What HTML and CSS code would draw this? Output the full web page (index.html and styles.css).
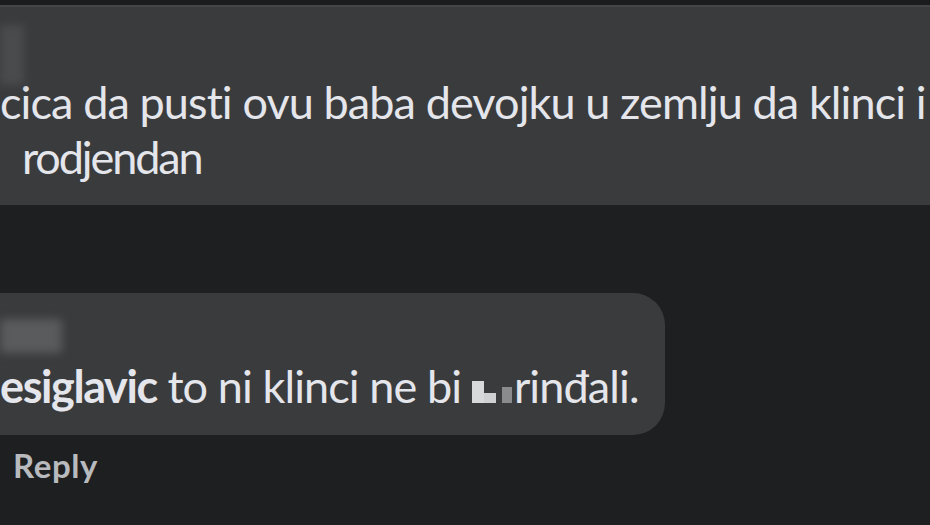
FILE: index.html
```html
<!DOCTYPE html>
<html lang="sr">
<head>
<meta charset="utf-8">
<title>Comment</title>
<link rel="stylesheet" href="styles.css">
</head>
<body>
<div class="page">
  <div class="top-strip"></div>
  <div class="bubble bubble-top">
    <div class="blur-name blur-top"></div>
    <div class="line line-1">cica da pusti ovu baba devojku u zemlju da klinci i</div>
    <div class="line line-2">rodjendan</div>
  </div>
  <div class="reply-area">
    <div class="bubble bubble-reply">
      <div class="blur-name blur-reply"></div>
      <div class="line reply-text"><span class="mention">esiglavic</span> to ni klinci ne bi <span class="censor"><span class="px px-a"></span><span class="px px-b"></span><span class="px px-c"></span></span>rinđali.</div>
    </div>
    <div class="actions"><span class="reply-link">Reply</span></div>
  </div>
</div>
</body>
</html>
```
FILE: styles.css
```css
html, body {
  margin: 0;
  padding: 0;
  background: #1e1f21;
  width: 930px;
  height: 525px;
  overflow: hidden;
}
.page {
  width: 930px;
  height: 525px;
  overflow: hidden;
  font-family: Lato, "Open Sans", sans-serif;
  color: #e4e6eb;
}
.top-strip {
  height: 5px;
  background: #1b1c1e;
}
.bubble {
  background: #3a3b3d;
}
.bubble-top {
  height: 198px;
  border-top: 2px solid #444547;
  display: flex;
  flex-direction: column;
}
.blur-top {
  width: 24px;
  height: 60px;
  margin-top: 18px;
  background: #4a4b4d;
  filter: blur(4px);
}
.line {
  font-size: 45px;
  letter-spacing: -0.9px;
  white-space: nowrap;
  line-height: 55px;
}
.line-1 {
  margin-top: -10px;
}
.line-2 {
  padding-left: 22px;
  letter-spacing: -2.1px;
}
.reply-area {
  margin-top: 88px;
}
.bubble-reply {
  width: 665px;
  height: 142px;
  border-radius: 0 32px 32px 0;
  display: flex;
  flex-direction: column;
}
.blur-reply {
  width: 62px;
  height: 34px;
  margin-top: 26px;
  background: #5a5b5d;
  filter: blur(5px);
}
.reply-text {
  margin-top: 6px;
}
.mention {
  font-weight: 700;
  letter-spacing: -1.4px;
}
.censor {
  display: inline-flex;
  align-items: flex-end;
  height: 24px;
  margin-right: 2px;
}
.px {
  display: inline-block;
}
.px-a {
  width: 12px;
  height: 22px;
  background: #d8d9db;
}
.px-b {
  width: 12px;
  height: 10px;
  background: #cfd0d2;
  margin-right: 6px;
}
.px-c {
  width: 10px;
  height: 16px;
  background: #8a8b8d;
}
.actions {
  padding: 10px 0 0 13px;
}
.reply-link {
  font-size: 33px;
  font-weight: 700;
  color: #b8babd;
  letter-spacing: 0.6px;
}
```
